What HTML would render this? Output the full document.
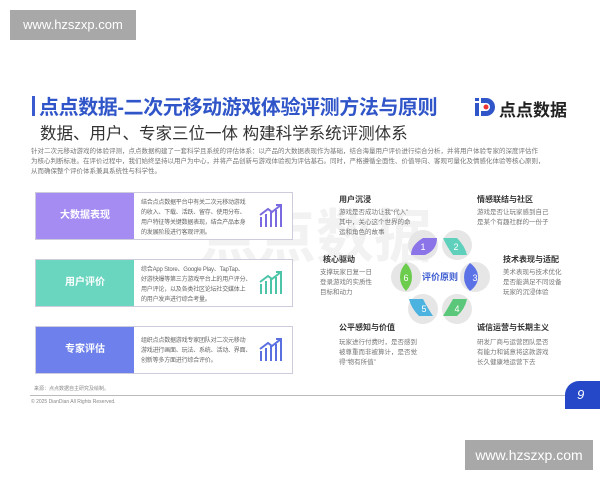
<!DOCTYPE html>
<html><head><meta charset="utf-8"><style>
*{margin:0;padding:0;box-sizing:border-box}
body{width:600px;height:480px;background:#fff;position:relative;overflow:hidden;font-family:"Liberation Sans","Noto Sans CJK SC",sans-serif}
.a{position:absolute}
.wm{background:#a8a8a8;color:#fff;font-size:13px;text-align:center;line-height:30px}
.t7{font-size:6.5px;color:#777;line-height:10px;white-space:nowrap}
.h{font-size:8px;font-weight:bold;color:#333}
.box{position:absolute;left:35px;width:258px;height:48px;border:1px solid #ccd;background:#fff}
.box .l{position:absolute;left:0;top:0;width:98px;height:46px;color:#fff;font-weight:bold;font-size:10px;text-align:center;line-height:46px}
.box .r{position:absolute;left:105px;top:5px;font-size:6px;color:#666;line-height:10px;white-space:nowrap;letter-spacing:-0.2px}
.box svg{position:absolute;right:8px;top:10px}
</style></head><body>
<div class="a wm" style="left:10px;top:10px;width:126px;height:30px">www.hzszxp.com</div>
<div class="a wm" style="left:465px;top:440px;width:128px;height:30px;font-size:14px">www.hzszxp.com</div>

<div class="a" style="left:200px;top:190px;font-size:58px;font-weight:bold;color:#f2f2f2;white-space:nowrap">点点数据</div>

<div class="a" style="left:32px;top:96px;width:3px;height:20px;background:#3a5bd0"></div>
<div class="a" style="left:39px;top:91px;font-size:20px;font-weight:bold;color:#2f55c8;white-space:nowrap;letter-spacing:-0.4px">点点数据-二次元移动游戏体验评测方法与原则</div>
<div class="a" style="left:40px;top:120px;font-size:16.5px;color:#333;white-space:nowrap">数据、用户、专家三位一体 构建科学系统评测体系</div>

<svg class="a" style="left:474px;top:96px" width="22" height="22" viewBox="0 0 22 22"><rect x="1" y="2" width="4" height="3" fill="#2f55c8"/><rect x="1" y="7" width="4" height="13" fill="#2f55c8"/><path d="M7 2h5a9 9 0 0 1 0 18H7v-5h5a4 4 0 0 0 0-8H7z" fill="#2f55c8"/><circle cx="12" cy="11" r="2.5" fill="#e33"/></svg>
<div class="a" style="left:499px;top:96px;font-size:17px;font-weight:bold;color:#222;white-space:nowrap">点点数据</div>

<div class="a t7" style="left:31px;top:147px">针对二次元移动游戏的体验评测，点点数据构建了一套科学且系统的评估体系：以产品的大数据表现作为基础，结合海量用户评价进行综合分析，并将用户体验专家的深度评估作<br>为核心判断标准。在评价过程中，我们始终坚持以用户为中心，并将产品创新与游戏体验视为评估基石。同时，严格遵循全面性、价值导向、客观可量化及情感化体验等核心原则，<br>从而确保整个评价体系兼具系统性与科学性。</div>

<div class="box" style="top:192px"><div class="l" style="background:#a58cf3">大数据表现</div><div class="r">结合点点数据平台中有关二次元移动游戏<br>的收入、下载、活跃、留存、使用分布、<br>用户特征等关键数据表现，结合产品本身<br>的发展阶段进行客观评测。</div>
<svg width="26" height="26" viewBox="0 0 26 26" fill="none" stroke="#7a6ae0" stroke-width="2"><path d="M3 24V14M8 24V11M13 24V9M18 24V7M23 24V5"/><path d="M2 12L10 6l4 3 9-7M18 2h5v5"/></svg></div>
<div class="box" style="top:259px"><div class="l" style="background:#6ad6bf">用户评价</div><div class="r">综合App Store、Google Play、TapTap、<br>好游快爆等第三方游戏平台上的用户评分、<br>用户评论，以及各类社区论坛社交媒体上<br>的用户发声进行综合考量。</div>
<svg width="26" height="26" viewBox="0 0 26 26" fill="none" stroke="#4cc4a8" stroke-width="2"><path d="M3 24V14M8 24V11M13 24V9M18 24V7M23 24V5"/><path d="M2 12L10 6l4 3 9-7M18 2h5v5"/></svg></div>
<div class="box" style="top:326px"><div class="l" style="background:#6d80ec">专家评估</div><div class="r" style="top:9px">组织点点数据游戏专家团队对二次元移动<br>游戏进行画面、玩法、系统、活动、界面、<br>创新等多方面进行综合评价。</div>
<svg width="26" height="26" viewBox="0 0 26 26" fill="none" stroke="#5a6fe0" stroke-width="2"><path d="M3 24V14M8 24V11M13 24V9M18 24V7M23 24V5"/><path d="M2 12L10 6l4 3 9-7M18 2h5v5"/></svg></div>

<svg class="a" style="left:380px;top:220px" width="130" height="120" viewBox="380 220 130 120">
<g fill="#e6e6e6"><circle cx="423" cy="245" r="15"/><circle cx="457" cy="245" r="15"/><circle cx="475" cy="277" r="15"/><circle cx="457" cy="309" r="15"/><circle cx="423" cy="309" r="15"/><circle cx="406" cy="277" r="15"/></g>
<path d="M411 255q0-10 12-17l14 0q0 12-12 17z" fill="#8b74e8"/>
<path d="M443 238h14q8 8 10 17h-14q-6-8-10-17z" fill="#5fd0bc"/>
<path d="M470 263q8 6 8 14t-8 14q-6-6-6-14t6-14z" fill="#5b72e6"/>
<path d="M443 316q6-10 10-17h14q-2 10-10 17z" fill="#5bc77a"/>
<path d="M409 299h14q4 8 10 17h-14q-8-8-10-17z" fill="#4cb2df"/>
<path d="M406 263q6 6 6 14t-6 14q-6-6-6-14t6-14z" fill="#6ccc4e"/>
<g fill="#fff" font-size="9" font-family="Liberation Sans" text-anchor="middle"><text x="423" y="250">1</text><text x="456" y="250">2</text><text x="475" y="281">3</text><text x="457" y="312">4</text><text x="424" y="312">5</text><text x="406" y="281">6</text></g>
<text x="440" y="280" text-anchor="middle" font-size="9" font-weight="bold" fill="#3b5bd0" font-family="Noto Sans CJK SC">评价原则</text>
</svg>

<div class="a h" style="left:339px;top:194px">用户沉浸</div>
<div class="a t7" style="left:339px;top:208px">游戏是否成功让我“代入”<br>其中，关心这个世界的命<br>运和角色的故事</div>
<div class="a h" style="left:477px;top:194px">情感联结与社区</div>
<div class="a t7" style="left:477px;top:208px">游戏是否让玩家感到自己<br>是某个有趣社群的一份子</div>
<div class="a h" style="left:323px;top:254px">核心驱动</div>
<div class="a t7" style="left:320px;top:268px">支撑玩家日复一日<br>登录游戏的实质性<br>目标和动力</div>
<div class="a h" style="left:503px;top:254px">技术表现与适配</div>
<div class="a t7" style="left:503px;top:268px">美术表现与技术优化<br>是否能满足不同设备<br>玩家的沉浸体验</div>
<div class="a h" style="left:339px;top:322px">公平感知与价值</div>
<div class="a t7" style="left:339px;top:338px">玩家进行付费时，是否感到<br>被尊重而非被算计，是否觉<br>得“物有所值”</div>
<div class="a h" style="left:477px;top:322px">诚信运营与长期主义</div>
<div class="a t7" style="left:477px;top:338px">研发厂商与运营团队是否<br>有能力和诚意将这款游戏<br>长久健康地运营下去</div>

<div class="a" style="left:34px;top:385px;font-size:5px;color:#888">来源：点点数据自主研究及绘制。</div>
<div class="a" style="left:30px;top:395px;width:542px;height:1px;background:#bbb"></div>
<div class="a" style="left:31px;top:399px;font-size:5px;color:#888">© 2025 DianDian All Rights Reserved.</div>
<div class="a" style="left:565px;top:381px;width:40px;height:28px;background:#2448c8;border-radius:14px 0 0 0;color:#fff;font-style:italic;font-size:13px;padding-left:12px;line-height:28px">9</div>
</body></html>
